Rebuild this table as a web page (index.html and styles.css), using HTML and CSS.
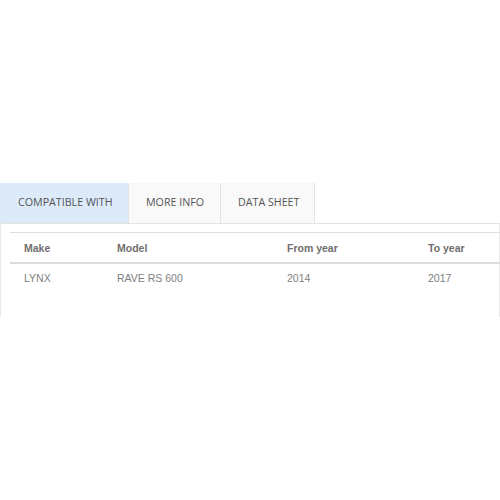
FILE: index.html
```html
<!DOCTYPE html>
<html>
<head>
<meta charset="utf-8">
<link rel="stylesheet" href="styles.css">
</head>
<body>
<div class="page">
  <div class="tabs">
    <div class="tab active">COMPATIBLE WITH</div>
    <div class="tab">MORE INFO</div>
    <div class="tab">DATA SHEET</div>
  </div>
  <div class="panel">
    <table class="compat">
      <thead>
        <tr><th class="c1">Make</th><th class="c2">Model</th><th class="c3">From year</th><th class="c4">To year</th></tr>
      </thead>
      <tbody>
        <tr><td>LYNX</td><td>RAVE RS 600</td><td>2014</td><td>2017</td></tr>
      </tbody>
    </table>
  </div>
</div>
</body>
</html>
```
FILE: styles.css
```css
html, body { margin: 0; padding: 0; background: #fff; }
.page { padding-top: 183px; }
.tabs { display: flex; height: 40px; }
.tab {
  font-family: "Open Sans", sans-serif;
  font-size: 10.7px;
  color: #555;
  background: #f9f9f9;
  border-right: 1px solid #e3e3e3;
  padding: 0 0 3px 17px;
  display: flex;
  align-items: center;
  box-sizing: border-box;
  white-space: nowrap;
}
.tab.active { background: #dceafa; width: 129px; padding-left: 18px; }
.tabs .tab:nth-child(2) { width: 92px; }
.tabs .tab:nth-child(3) { width: 94px; }
.panel {
  border-top: 1px solid #e3e3e3;
  border-left: 1px solid #e8e8e8;
  border-right: 1px solid #e8e8e8;
  height: 94px;
  padding: 8px 0 0 9px;
  box-sizing: border-box;
}
.compat {
  border-collapse: collapse;
  width: 491px;
  font-family: "Liberation Sans", Arial, sans-serif;
  font-size: 10.5px;
}
.compat th, .compat td {
  text-align: left;
  padding: 0 0 0 14px;
  white-space: nowrap;
}
.compat th { height: 29px; color: #6f6f6f; font-weight: bold; }
.compat td { height: 28px; color: #808080; }
.compat thead tr { border-top: 1px solid #ddd; border-bottom: 2px solid #ddd; }
.c1 { width: 79px; }
.c2 { width: 156px; }
.c3 { width: 127px; }
```
